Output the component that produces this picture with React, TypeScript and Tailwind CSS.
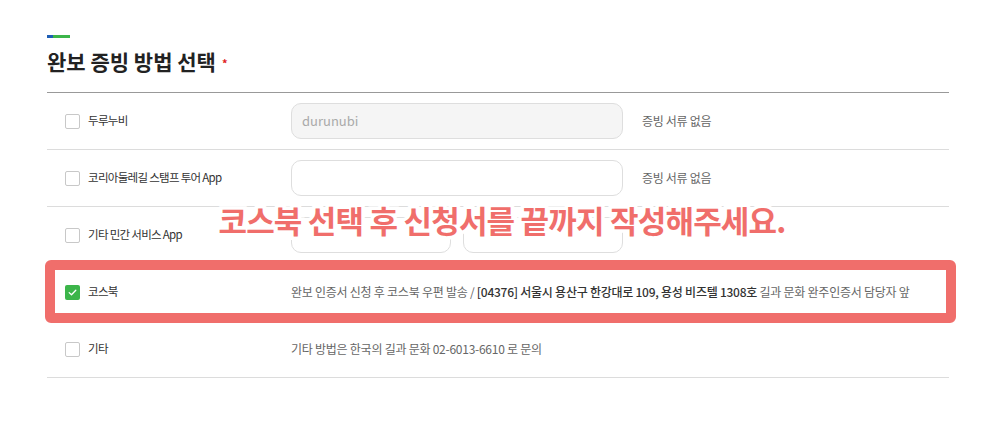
import React from "react";

const font = { fontFamily: '"Noto Sans CJK KR", "Noto Sans", sans-serif' };

function Box({ checked = false }: { checked?: boolean }) {
  if (checked) {
    return (
      <span className="flex h-[15px] w-[15px] items-center justify-center rounded-[2px] bg-[#3cb54a]">
        <svg width="11" height="11" viewBox="0 0 11 11" fill="none">
          <path d="M2.2 5.6 L4.5 7.8 L8.8 3.2" stroke="#fff" strokeWidth="1.3" strokeLinecap="round" strokeLinejoin="round" />
        </svg>
      </span>
    );
  }
  return <span className="block h-[15px] w-[15px] rounded-[2px] border border-[#c8c8c8] bg-white" />;
}

function Row({
  label,
  checked,
  children,
  right,
  annotated,
}: {
  label: string;
  checked?: boolean;
  children?: React.ReactNode;
  right?: string;
  annotated?: boolean;
}) {
  return (
    <div className="relative flex h-[57px] items-center border-b border-[#dcdcdc]">
      {annotated && (
        <div className="pointer-events-none absolute -left-[2px] -right-[7px] -top-[4px] -bottom-[3px] rounded-[6px] border-[10px] border-[#f06e6b]" />
      )}
      <div className="flex w-[244px] items-center pl-[18px]">
        <Box checked={checked} />
        <span className="ml-[8px] text-[11.5px] tracking-[-0.7px] text-[#333]">{label}</span>
      </div>
      {children}
      {right && <span className="ml-[19px] text-[12px] tracking-[-0.3px] text-[#666]">{right}</span>}
    </div>
  );
}

export default function App() {
  return (
    <div className="relative h-[422px] w-[1004px] bg-white" style={font}>
      <div className="ml-[47px] w-[902px] pt-[35px]">
        <div className="flex h-[3px] w-[23px]">
          <div className="w-[6px] bg-[#1e5eb4]" />
          <div className="flex-1 bg-[#3cb54a]" />
        </div>
        <div className="mt-[9px] flex items-center">
          <h2 className="text-[21px] font-bold leading-[28px] tracking-[0px] text-[#222]">완보 증빙 방법 선택</h2>
          <span className="ml-[6px] mt-[4px] text-[11px] font-bold text-[#e02020]">*</span>
        </div>
        <div className="mt-[17px] border-t border-[#999]">
          <Row label="두루누비" right="증빙 서류 없음">
            <div className="flex h-[36px] w-[332px] items-center rounded-[10px] border border-[#dedede] bg-[#f5f5f5] px-[10px] text-[13px] text-[#aaa]">
              durunubi
            </div>
          </Row>
          <Row label="코리아둘레길 스탬프 투어 App" right="증빙 서류 없음">
            <div className="h-[36px] w-[332px] rounded-[10px] border border-[#dedede] bg-white" />
          </Row>
          <Row label="기타 민간 서비스 App">
            <div className="flex w-[332px] gap-[12px]">
              <div className="h-[36px] w-[160px] rounded-[10px] border border-[#dedede] bg-white" />
              <div className="h-[36px] flex-1 rounded-[10px] border border-[#dedede] bg-white" />
            </div>
          </Row>
          <Row label="코스북" checked annotated>
            <span className="text-[12px] tracking-[-0.25px] text-[#666]">
              완보 인증서 신청 후 코스북 우편 발송 /{" "}
              <span className="font-medium text-[#333]">[04376] 서울시 용산구 한강대로 109, 용성 비즈텔 1308호</span> 길과 문화 완주인증서 담당자 앞
            </span>
          </Row>
          <Row label="기타">
            <span className="text-[12px] tracking-[-0.25px] text-[#666]">기타 방법은 한국의 길과 문화 02-6013-6610 로 문의</span>
          </Row>
        </div>
      </div>
      <div className="pointer-events-none absolute left-0 right-0 top-[202px] text-center">
        <span className="text-[31px] font-bold leading-[36px] tracking-[-0.8px] text-[#f06e6b] [paint-order:stroke_fill] [-webkit-text-stroke:7px_white]">
          코스북 선택 후 신청서를 끝까지 작성해주세요.
        </span>
      </div>
    </div>
  );
}
